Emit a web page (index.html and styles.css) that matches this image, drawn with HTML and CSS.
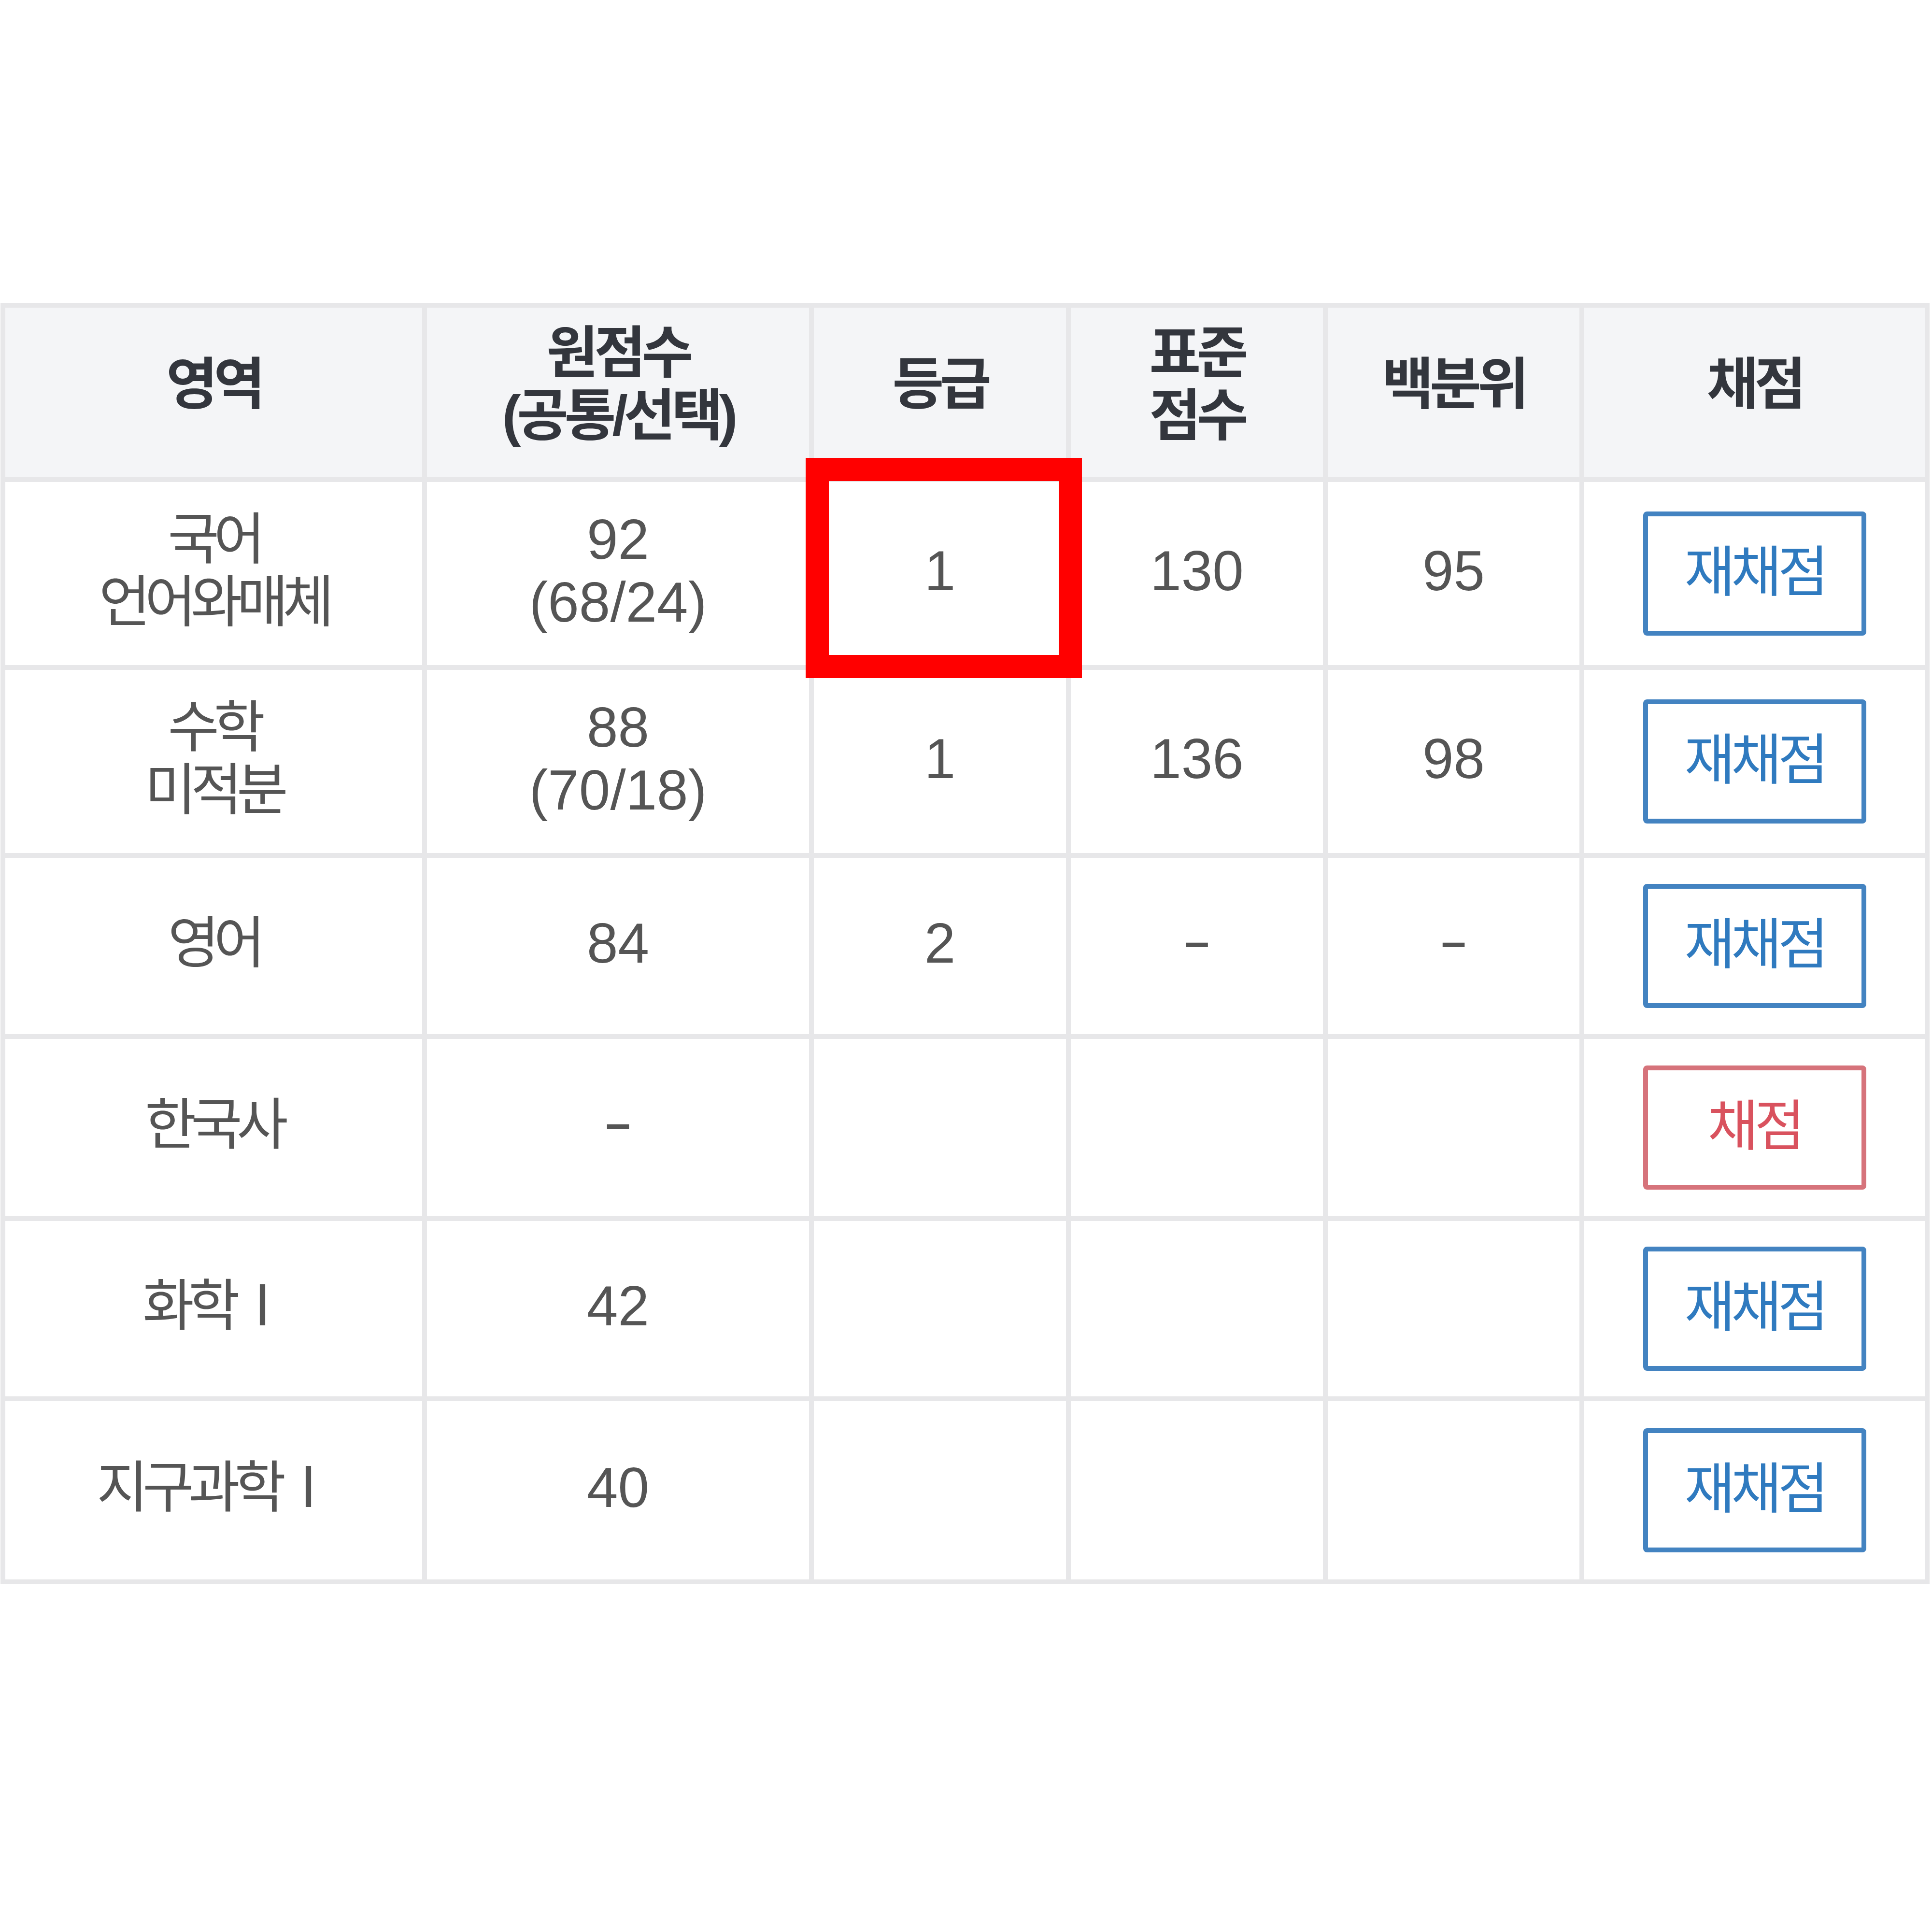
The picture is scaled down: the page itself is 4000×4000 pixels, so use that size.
FILE: index.html
```html
<!DOCTYPE html>
<html lang="ko">
<head>
<meta charset="utf-8">
<title>성적</title>
<link rel="stylesheet" href="styles.css">
</head>
<body>
<div class="page">
  <div class="score-table">
    <div class="th ko">영역</div>
    <div class="th ko">원점수<br>(공통/선택)</div>
    <div class="th ko">등급</div>
    <div class="th ko">표준<br>점수</div>
    <div class="th ko">백분위</div>
    <div class="th ko">채점</div>

    <div class="td ko">국어<br>언어와매체</div>
    <div class="td num">92<br>(68/24)</div>
    <div class="td num">1</div>
    <div class="td num">130</div>
    <div class="td num">95</div>
    <div class="td act"><button class="btn btn-blue">재채점</button></div>

    <div class="td ko">수학<br>미적분</div>
    <div class="td num">88<br>(70/18)</div>
    <div class="td num">1</div>
    <div class="td num">136</div>
    <div class="td num">98</div>
    <div class="td act"><button class="btn btn-blue">재채점</button></div>

    <div class="td ko">영어</div>
    <div class="td num">84</div>
    <div class="td num">2</div>
    <div class="td num dash">–</div>
    <div class="td num dash">–</div>
    <div class="td act"><button class="btn btn-blue">재채점</button></div>

    <div class="td ko">한국사</div>
    <div class="td num dash">–</div>
    <div class="td"></div>
    <div class="td"></div>
    <div class="td"></div>
    <div class="td act"><button class="btn btn-red">채점</button></div>

    <div class="td ko">화학Ⅰ</div>
    <div class="td num">42</div>
    <div class="td"></div>
    <div class="td"></div>
    <div class="td"></div>
    <div class="td act"><button class="btn btn-blue">재채점</button></div>

    <div class="td ko">지구과학Ⅰ</div>
    <div class="td num">40</div>
    <div class="td"></div>
    <div class="td"></div>
    <div class="td"></div>
    <div class="td act"><button class="btn btn-blue">재채점</button></div>
  </div>
  <div class="highlight"></div>
</div>
</body>
</html>
```

FILE: styles.css
```css
html, body {
  margin: 0;
  padding: 0;
  background: #ffffff;
}

body {
  font-family: "Liberation Sans", "Noto Sans CJK KR", sans-serif;
  color: #555555;
}

.page {
  position: relative;
  width: 4000px;
  height: 4000px;
  padding-top: 627px;
  box-sizing: border-box;
}

.score-table {
  display: grid;
  grid-template-columns: 863px 791px 522px 522px 521px 705px;
  grid-template-rows: 351px 379px 379px 365px 367px 363px 369px;
  gap: 10px;
  padding: 10px;
  margin-left: 1px;
  width: max-content;
  background: #e7e7e9;
}

.th,
.td {
  display: flex;
  align-items: center;
  justify-content: center;
  text-align: center;
  box-sizing: border-box;
}

.th {
  background: #f4f5f7;
  color: #33363d;
  font-weight: 700;
  font-size: 116px;
  line-height: 130px;
  padding-bottom: 34px;
}

.td {
  background: #ffffff;
  font-size: 116px;
  line-height: 130px;
  font-weight: 400;
  padding-bottom: 12px;
}

.td.act {
  padding-bottom: 0;
}

.ko {
  letter-spacing: -0.1em;
}

.th.ko {
  letter-spacing: -0.07em;
}

.num {
  letter-spacing: 0;
}

.dash {
  font-size: 92px;
  font-weight: 700;
  padding-bottom: 20px;
}

.btn {
  width: 462px;
  height: 257px;
  background: #ffffff;
  border-radius: 8px;
  font-family: "Liberation Sans", "Noto Sans CJK KR", sans-serif;
  font-size: 114px;
  font-weight: 400;
  letter-spacing: -0.07em;
  padding: 0 0 6px 0;
  line-height: 1;
}

.btn-blue {
  border: 10px solid #4383c1;
  color: #2f7abf;
}

.btn-red {
  border: 10px solid #d6737b;
  color: #d9525e;
}

.highlight {
  position: absolute;
  left: 1668px;
  top: 948px;
  width: 572px;
  height: 456px;
  box-sizing: border-box;
  border: 48px solid #ff0000;
}
```
